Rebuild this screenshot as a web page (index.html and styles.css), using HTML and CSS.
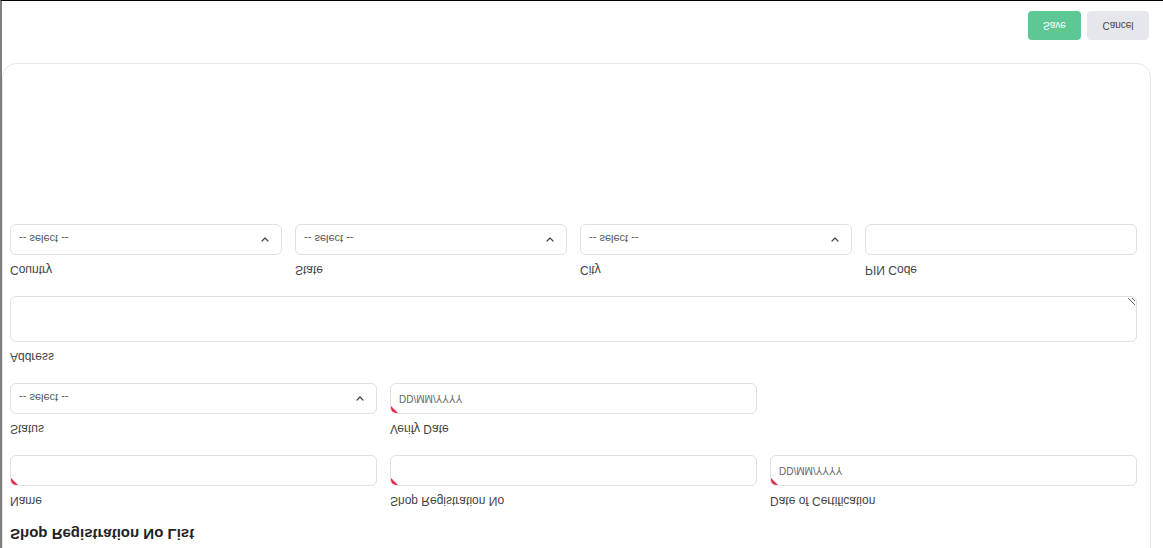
FILE: index.html
```html
<!DOCTYPE html>
<html lang="en">
<head>
<meta charset="utf-8">
<title>Shop Registration</title>
<link rel="stylesheet" href="styles.css">
</head>
<body>
<div class="page">
  <section class="card">
    <h2 class="title">Shop Registration No List</h2>
    <div class="grid3">
      <div class="field">
        <label class="label">Name</label>
        <div class="control req"></div>
      </div>
      <div class="field">
        <label class="label">Shop Registration No</label>
        <div class="control req"></div>
      </div>
      <div class="field">
        <label class="label">Date of Certification</label>
        <div class="control req"><span class="ph">DD/MM/YYYY</span></div>
      </div>
    </div>
    <div class="grid3">
      <div class="field">
        <label class="label">Status</label>
        <div class="control select"><span class="ph ph-sel">-- select --</span>
          <svg class="chev" width="8" height="5" viewBox="0 0 8 5"><path d="M1 1l3 3 3-3" fill="none" stroke="#444" stroke-width="1.2" stroke-linecap="round" stroke-linejoin="round"/></svg>
        </div>
      </div>
      <div class="field">
        <label class="label">Verify Date</label>
        <div class="control req"><span class="ph">DD/MM/YYYY</span></div>
      </div>
    </div>
    <div class="field">
      <label class="label">Address</label>
      <textarea class="area"></textarea>
    </div>
    <div class="grid4">
      <div class="field">
        <label class="label">Country</label>
        <div class="control select"><span class="ph ph-sel">-- select --</span>
          <svg class="chev" width="8" height="5" viewBox="0 0 8 5"><path d="M1 1l3 3 3-3" fill="none" stroke="#444" stroke-width="1.2" stroke-linecap="round" stroke-linejoin="round"/></svg>
        </div>
      </div>
      <div class="field">
        <label class="label">State</label>
        <div class="control select"><span class="ph ph-sel">-- select --</span>
          <svg class="chev" width="8" height="5" viewBox="0 0 8 5"><path d="M1 1l3 3 3-3" fill="none" stroke="#444" stroke-width="1.2" stroke-linecap="round" stroke-linejoin="round"/></svg>
        </div>
      </div>
      <div class="field">
        <label class="label">City</label>
        <div class="control select"><span class="ph ph-sel">-- select --</span>
          <svg class="chev" width="8" height="5" viewBox="0 0 8 5"><path d="M1 1l3 3 3-3" fill="none" stroke="#444" stroke-width="1.2" stroke-linecap="round" stroke-linejoin="round"/></svg>
        </div>
      </div>
      <div class="field">
        <label class="label">PIN Code</label>
        <div class="control"></div>
      </div>
    </div>
  </section>
  <div class="actions">
    <button class="btn btn-save">Save</button>
    <button class="btn btn-cancel">Cancel</button>
  </div>
</div>
</body>
</html>
```
FILE: styles.css
```css
html, body {
  margin: 0;
  padding: 0;
  background: #ffffff;
}
body {
  font-family: "Liberation Sans", Arial, sans-serif;
  color: #333;
}
.page {
  width: 1163px;
  height: 548px;
  box-sizing: border-box;
  border-left: 2px solid #7e7e7e;
  border-bottom: 1px solid #000;
  display: flex;
  flex-direction: column;
  overflow: hidden;
  transform: scaleY(-1);
}
.card {
  flex: none;
  margin: -20px 12px 0 0;
  padding: 24px 13px 160px 7px;
  border: 1px solid #e6e6e6;
  border-radius: 14px;
  display: flex;
  flex-direction: column;
  gap: 19px;
}
.title {
  margin: 0 0 -2px 0;
  font-size: 15px;
  line-height: 18px;
  font-weight: 700;
  color: #222;
}
.grid3 {
  display: grid;
  grid-template-columns: repeat(3, 1fr);
  column-gap: 13px;
}
.grid4 {
  display: grid;
  grid-template-columns: repeat(4, 1fr);
  column-gap: 13px;
}
.field {
  display: flex;
  flex-direction: column;
  gap: 8px;
}
.label {
  font-size: 12px;
  line-height: 14px;
  color: #444;
}
.control {
  position: relative;
  height: 31px;
  box-sizing: border-box;
  border: 1px solid #e0e0e0;
  border-radius: 6px;
  overflow: hidden;
  display: flex;
  align-items: center;
  padding: 0 12px 0 8px;
  background: #fff;
}
.select {
  justify-content: space-between;
}
.ph {
  font-size: 10px;
  color: #666;
}
.ph-sel {
  font-size: 11px;
  color: #555;
}
.chev {
  display: block;
}
.req::before {
  content: "";
  position: absolute;
  left: 0;
  top: 0;
  width: 0;
  height: 0;
  border-top: 7px solid #e02f4a;
  border-right: 7px solid transparent;
}
.area {
  display: block;
  height: 46px;
  box-sizing: border-box;
  border: 1px solid #e0e0e0;
  border-radius: 6px;
  margin: 0;
  padding: 6px 8px;
  resize: vertical;
  font-family: inherit;
}
.actions {
  margin-top: 23px;
  display: flex;
  justify-content: flex-end;
  gap: 6px;
  padding-right: 14px;
}
.btn {
  height: 29px;
  border: none;
  border-radius: 4px;
  font-family: inherit;
  font-size: 10px;
  cursor: pointer;
}
.btn-save {
  width: 53px;
  background: #5dc893;
  color: #fff;
}
.btn-cancel {
  width: 62px;
  background: #e5e7eb;
  color: #444;
}
```
